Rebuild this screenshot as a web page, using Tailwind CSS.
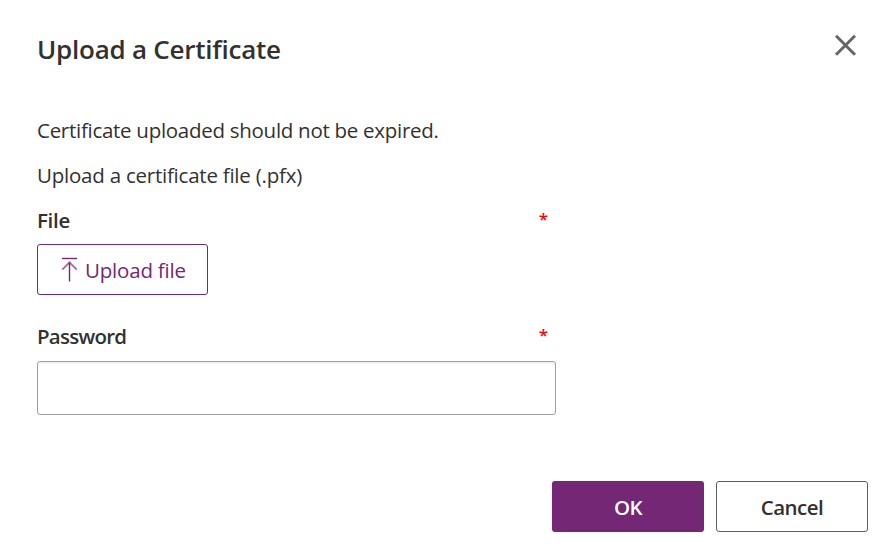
<!DOCTYPE html>
<html lang="en"><head><meta charset="utf-8"><title>Upload a Certificate</title>
<script src="https://cdn.jsdelivr.net/npm/@tailwindcss/browser@4"></script></head>
<body class="h-[559px] w-[895px] overflow-hidden bg-white font-['Open_Sans',sans-serif] text-[20.5px] leading-[28px] text-[#323130]">
<main class="flex h-full flex-col pt-[31px] pr-[27px] pl-[37px] whitespace-nowrap">
<header class="flex h-[85px] items-start justify-between">
<h1 class="text-[26px] leading-[36px] font-semibold tracking-[-0.24px]">Upload a Certificate</h1>
<button aria-label="Close" class="mt-[3px] mr-[11px]"><svg width="23" height="23" viewBox="0 0 23 23" fill="none" stroke="#666" stroke-width="3"><path d="M2 1.7 21 20.7M21 1.7 2 20.7"/></svg></button>
</header>
<p class="h-[45px] tracking-[-0.28px]">Certificate uploaded should not be expired.</p>
<p class="h-[45px] tracking-[-0.23px]">Upload a certificate file (.pfx)</p>
<div class="flex h-[38px] w-[519px] justify-between font-semibold"><span class="tracking-[-0.3px]">File</span><span class="mt-px mr-[8px] text-[17px] leading-[24px] text-[#f00]">*</span></div>
<button class="flex h-[51px] w-[171px] shrink-0 items-center gap-[7px] rounded-[3px] border border-[#742774] pl-[23px] text-[#742774]"><svg width="17" height="26" viewBox="0 0 17 26" fill="none" stroke="currentColor" stroke-width="1.4"><path d="M1 1.5H16"/><path d="M8.5 24.5V5.5"/><path d="M1.3 12.6 8.5 5.4l7.2 7.2" stroke-width="2" stroke-opacity=".65"/></svg><span class="tracking-[-0.2px]">Upload file</span></button>
<label for="password" class="mt-[27px] flex h-[39px] w-[519px] justify-between font-semibold"><span class="tracking-[-0.75px]">Password</span><span class="mt-px mr-[8px] text-[17px] leading-[24px] text-[#f00]">*</span></label>
<input id="password" type="password" class="h-[54px] w-[519px] shrink-0 rounded-[3px] border border-[#a0a0a0] shadow-[inset_0_2px_2px_rgba(0,0,0,0.06)]">
<footer class="mt-[66px] flex justify-end gap-[12px] font-semibold tracking-[-0.5px]"><button class="h-[51px] w-[152px] rounded-[3px] bg-[#742774] pt-px text-white">OK</button><button class="h-[51px] w-[152px] rounded-[3px] border border-[#605e5c] pt-px">Cancel</button></footer>
</main></body></html>
